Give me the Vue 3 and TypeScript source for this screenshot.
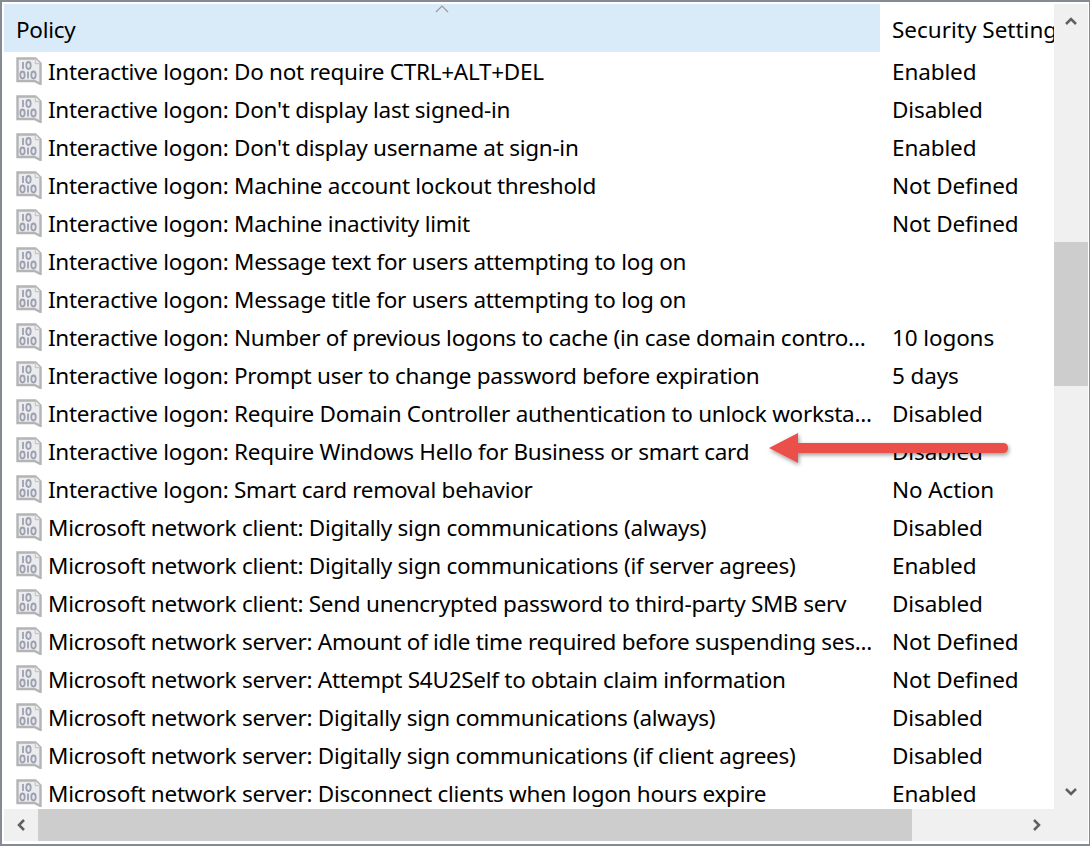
<script setup lang="ts">
interface Row { name: string; value: string }
const rows: Row[] = [
  { name: 'Interactive logon: Do not require CTRL+ALT+DEL', value: 'Enabled' },
  { name: "Interactive logon: Don't display last signed-in", value: 'Disabled' },
  { name: "Interactive logon: Don't display username at sign-in", value: 'Enabled' },
  { name: 'Interactive logon: Machine account lockout threshold', value: 'Not Defined' },
  { name: 'Interactive logon: Machine inactivity limit', value: 'Not Defined' },
  { name: 'Interactive logon: Message text for users attempting to log on', value: '' },
  { name: 'Interactive logon: Message title for users attempting to log on', value: '' },
  { name: 'Interactive logon: Number of previous logons to cache (in case domain contro...', value: '10 logons' },
  { name: 'Interactive logon: Prompt user to change password before expiration', value: '5 days' },
  { name: 'Interactive logon: Require Domain Controller authentication to unlock worksta...', value: 'Disabled' },
  { name: 'Interactive logon: Require Windows Hello for Business or smart card', value: 'Disabled' },
  { name: 'Interactive logon: Smart card removal behavior', value: 'No Action' },
  { name: 'Microsoft network client: Digitally sign communications (always)', value: 'Disabled' },
  { name: 'Microsoft network client: Digitally sign communications (if server agrees)', value: 'Enabled' },
  { name: 'Microsoft network client: Send unencrypted password to third-party SMB serv', value: 'Disabled' },
  { name: 'Microsoft network server: Amount of idle time required before suspending ses...', value: 'Not Defined' },
  { name: 'Microsoft network server: Attempt S4U2Self to obtain claim information', value: 'Not Defined' },
  { name: 'Microsoft network server: Digitally sign communications (always)', value: 'Disabled' },
  { name: 'Microsoft network server: Digitally sign communications (if client agrees)', value: 'Disabled' },
  { name: 'Microsoft network server: Disconnect clients when logon hours expire', value: 'Enabled' },
]
</script>

<template>
  <div class="window">
    <div class="main">
      <div class="list">
        <div class="header">
          <div class="col-policy">Policy</div>
          <div class="col-setting">Security Setting</div>
          <svg class="sort" viewBox="0 0 14 8" width="14" height="8"><path d="M1 7 7 1l6 6" fill="none" stroke="#9a9a9a" stroke-width="1.2" /></svg>
        </div>
        <div class="rows">
          <div v-for="row in rows" :key="row.name" class="row">
            <div class="name">
              <svg class="icon" viewBox="0 0 26 28" width="26" height="28">
                <path d="M1.500 1.500H19.500l5 5V27l-6-3H1.500z" fill="#ebecf0" stroke="#b4b4b4" stroke-width="2.400" />
                <path d="M19.500 2v4.500h4.500" fill="#f8f8f8" stroke="#c8c8c8" stroke-width="1.500" />
                <g fill="none" stroke="#9ea1ad" stroke-width="1.800">
                  <path d="M7 5v7" /><ellipse cx="12.500" cy="8.500" rx="2.200" ry="3.500" />
                  <ellipse cx="6.500" cy="18" rx="2.200" ry="3.500" /><path d="M12 14.500v7" /><ellipse cx="17.500" cy="18" rx="2.200" ry="3.500" />
                </g>
              </svg>
              <span class="label">{{ row.name }}</span>
            </div>
            <div class="value">{{ row.value }}</div>
          </div>
        </div>
        <svg class="arrow" viewBox="0 0 250 44" width="250" height="44">
          <defs>
            <filter id="shadow" x="-10%" y="-30%" width="120%" height="170%">
              <feDropShadow dx="1" dy="2" stdDeviation="2" flood-color="#000" flood-opacity="0.4" />
            </filter>
          </defs>
          <path d="M7 19 36 4v10h205q5 0 5 5t-5 5H36v10z" fill="#eb4f4a" filter="url(#shadow)" />
        </svg>
      </div>
      <div class="vscroll">
        <button class="arrow-btn"><svg viewBox="0 0 12 8" width="12" height="8"><path d="M1 7l5-5 5 5" class="chev" /></svg></button>
        <div class="vtrack"><div class="vthumb"></div></div>
        <button class="arrow-btn"><svg viewBox="0 0 12 8" width="12" height="8"><path d="M1 1l5 5 5-5" class="chev" /></svg></button>
      </div>
    </div>
    <div class="hscroll">
      <button class="harrow"><svg viewBox="0 0 8 12" width="8" height="12"><path d="M7 1 2 6l5 5" class="chev" /></svg></button>
      <div class="hthumb"></div>
      <div class="hspace"></div>
      <button class="harrow"><svg viewBox="0 0 8 12" width="8" height="12"><path d="M1 1l5 5-5 5" class="chev" /></svg></button>
      <div class="corner"></div>
    </div>
  </div>
</template>

<style>
html, body { margin: 0; background: #fff; }
</style>

<style scoped>
.window {
  box-sizing: border-box;
  width: 1090px;
  height: 846px;
  border: 2px solid #868a94;
  border-right-width: 1px;
  padding: 2px 1px 3px 2px;
  display: flex;
  flex-direction: column;
  background: #fff;
  overflow: hidden;
  font-family: "Noto Sans", "Open Sans", sans-serif;
  font-size: 22.500px;
  letter-spacing: -0.27px;
  color: #000;
}
.main { flex: 1; display: flex; min-height: 0; }
.list { position: relative; flex: 1; min-width: 0; overflow: hidden; }
.header { position: relative; display: flex; height: 48px; }
.col-policy {
  width: 876px;
  box-sizing: border-box;
  padding: 2px 0 0 12px;
  background: #d9ebf9;
  display: flex;
  align-items: center;
}
.col-setting { flex: 1; padding: 2px 0 0 12px; display: flex; align-items: center; white-space: nowrap; overflow: hidden; letter-spacing: 0; }
.sort { position: absolute; left: 431px; top: 1px; }
.row { display: flex; height: 38px; align-items: center; }
.name { width: 876px; box-sizing: border-box; padding-left: 12px; display: flex; align-items: center; gap: 6px; }
.icon { flex: none; }
.label { white-space: nowrap; }
.value { padding-left: 12px; white-space: nowrap; letter-spacing: -0.12px; }
.arrow { position: absolute; left: 758px; top: 425px; }
.vscroll { width: 34px; flex: none; background: #f0f0f0; display: flex; flex-direction: column; }
.arrow-btn { height: 34px; flex: none; border: 0; padding: 0; background: transparent; display: flex; align-items: center; justify-content: center; }
.vtrack { flex: 1; padding-top: 204px; }
.vthumb { height: 144px; background: #cdcdcd; }
.hscroll { height: 32px; flex: none; display: flex; background: #f0f0f0; }
.harrow { width: 34px; flex: none; border: 0; padding: 0; background: transparent; display: flex; align-items: center; justify-content: center; }
.hthumb { width: 874px; flex: none; background: #cdcdcd; }
.hspace { flex: 1; }
.corner { width: 34px; flex: none; }
.chev { fill: none; stroke: #606060; stroke-width: 2.500; }
</style>
